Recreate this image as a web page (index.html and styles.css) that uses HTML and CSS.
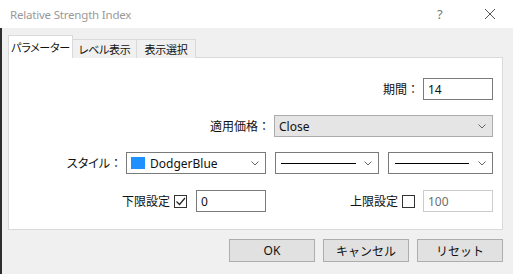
FILE: index.html
```html
<!DOCTYPE html>
<html>
<head>
  <meta charset="utf-8">
  <title>Relative Strength Index</title>
  <link rel="stylesheet" href="styles.css">
</head>
<body>
  <div class="window">
    <div class="titlebar">
      <span class="title">Relative Strength Index</span>
      <span class="help">?</span>
      <span class="close">
        <svg width="12" height="12" viewBox="0 0 12 12"><path d="M1 1 L11 11 M11 1 L1 11" stroke="#555" stroke-width="1" fill="none"/></svg>
      </span>
    </div>

    <div class="client">
      <div class="tabs">
        <div class="tab active">パラメーター</div>
        <div class="tab tab-level">レベル表示</div>
        <div class="tab tab-view">表示選択</div>
      </div>

      <div class="panel">
        <div class="row">
          <span class="label">期間<span class="colon">：</span></span>
          <div class="input w70">14</div>
        </div>

        <div class="row">
          <span class="label">適用価格<span class="colon">：</span></span>
          <div class="combo w219">
            <span>Close</span>
            <svg class="chev" width="8" height="5" viewBox="0 0 8 5"><path d="M0.5 0.5 L4 4 L7.5 0.5" stroke="#666" fill="none"/></svg>
          </div>
        </div>

        <div class="row">
          <span class="label">スタイル<span class="colon">：</span></span>
          <div class="select color-select">
            <span class="swatch"></span>
            <span>DodgerBlue</span>
            <svg class="chev" width="8" height="5" viewBox="0 0 8 5"><path d="M0.5 0.5 L4 4 L7.5 0.5" stroke="#666" fill="none"/></svg>
          </div>
          <div class="select line-select">
            <span class="line"></span>
            <svg class="chev" width="8" height="5" viewBox="0 0 8 5"><path d="M0.5 0.5 L4 4 L7.5 0.5" stroke="#666" fill="none"/></svg>
          </div>
          <div class="select width-select">
            <span class="line"></span>
            <svg class="chev" width="8" height="5" viewBox="0 0 8 5"><path d="M0.5 0.5 L4 4 L7.5 0.5" stroke="#666" fill="none"/></svg>
          </div>
        </div>

        <div class="row levels">
          <div class="group">
            <span class="label">下限設定</span>
            <span class="checkbox checked">
              <svg width="11" height="11" viewBox="0 0 11 11"><path d="M1.5 5.5 L4.5 8.5 L10 2" stroke="#222" stroke-width="1.2" fill="none"/></svg>
            </span>
            <div class="input w70">0</div>
          </div>
          <div class="group">
            <span class="label">上限設定</span>
            <span class="checkbox"></span>
            <div class="input w70 disabled">100</div>
          </div>
        </div>
      </div>

      <div class="buttons">
        <button>OK</button>
        <button>キャンセル</button>
        <button>リセット</button>
      </div>
    </div>
  </div>
</body>
</html>
```

FILE: styles.css
```css
:root {
  --face: #f0f0f0;
  --tab-border: #d9d9d9;
  --field-border: #7a7a7a;
  --btn-face: #e1e1e1;
  --btn-border: #adadad;
  --text: #111111;
  --muted: #6d6d6d;
}

body {
  margin: 0;
  width: 513px;
  height: 274px;
  overflow: hidden;
  font-family: "Noto Sans", "Noto Sans CJK JP", sans-serif;
  font-size: 12px;
  color: var(--text);
  background: var(--face);
}

.window {
  display: flex;
  flex-direction: column;
  height: 274px;
}

/* title bar */
.titlebar {
  height: 28px;
  background: #ffffff;
  display: flex;
  align-items: center;
  padding-left: 10px;
}

.title {
  flex: 1;
  color: #999999;
  font-size: 11.5px;
  letter-spacing: -0.2px;
}

.help {
  width: 14px;
  color: #777777;
  font-size: 13px;
  margin-right: 33px;
}

.close {
  width: 12px;
  margin-right: 17px;
  display: flex;
}

/* client area */
.client {
  flex: 1;
  border-left: 2px solid #2e2e2e;
  padding: 8px 10px 0 6px;
  font-feature-settings: "palt";
}

.tabs {
  display: flex;
  align-items: flex-end;
  height: 22px;
  margin-bottom: -1px;
}

.tab {
  height: 19px;
  box-sizing: border-box;
  border: 1px solid var(--tab-border);
  border-bottom: none;
  border-left: none;
  display: flex;
  align-items: center;
  justify-content: center;
  background: var(--face);
  white-space: nowrap;
  font-size: 11px;
  letter-spacing: -0.3px;
}

.tab.active {
  position: relative;
  width: 65px;
  height: 23px;
  background: #ffffff;
  border-left: 1px solid var(--tab-border);
  padding-bottom: 1px;
}

.tab-level { width: 64px; }
.tab-view { width: 59px; }

.panel {
  background: #ffffff;
  border: 1px solid var(--tab-border);
  height: 173px;
  box-sizing: border-box;
  padding: 20px 9px 0 0;
  display: flex;
  flex-direction: column;
  gap: 15px;
}

.row {
  display: flex;
  justify-content: flex-end;
  align-items: center;
  height: 22px;
}

.row.levels {
  display: grid;
  grid-template-columns: 1fr 227px;
  margin-top: 1px;
}

.group {
  display: flex;
  justify-content: flex-end;
  align-items: center;
}

.label {
  margin-right: 4px;
  white-space: nowrap;
}

.colon {
  font-feature-settings: normal;
}

.input, .combo, .select {
  height: 22px;
  box-sizing: border-box;
  display: flex;
  align-items: center;
  padding-left: 4px;
  white-space: nowrap;
}

.input {
  border: 1px solid var(--field-border);
  background: #ffffff;
}

.input.disabled {
  border-color: #cccccc;
  color: var(--muted);
}

.w70 { width: 70px; }
.w219 { width: 219px; }

.combo {
  background: #e5e5e5;
  border: 1px solid #acacac;
}

.select {
  border: 1px solid var(--field-border);
  background: #ffffff;
  margin-left: 9px;
}

.chev {
  margin-left: auto;
  margin-right: 6px;
}

.color-select {
  width: 140px;
  margin-left: 0;
}

.swatch {
  width: 14px;
  height: 12px;
  background: #1e90ff;
  margin-right: 5px;
}

.line-select { width: 104px; }
.width-select { width: 105px; }

.line {
  height: 1px;
  background: #000000;
  width: 75px;
  margin-left: 1px;
}

.width-select .line {
  width: 74px;
  margin-left: 2px;
}

.checkbox {
  width: 13px;
  height: 13px;
  box-sizing: border-box;
  border: 1px solid #333333;
  background: #ffffff;
  margin-right: 9px;
  display: flex;
  align-items: center;
  justify-content: center;
}

.levels .group:last-child .checkbox {
  margin-right: 8px;
}

/* dialog buttons */
.buttons {
  display: flex;
  justify-content: flex-end;
  gap: 8px;
  margin-top: 9px;
  padding-right: 0;
}

button {
  width: 86px;
  height: 23px;
  background: var(--btn-face);
  border: 1px solid var(--btn-border);
  font-family: inherit;
  font-size: 12px;
  color: var(--text);
  padding: 0;
}
```
